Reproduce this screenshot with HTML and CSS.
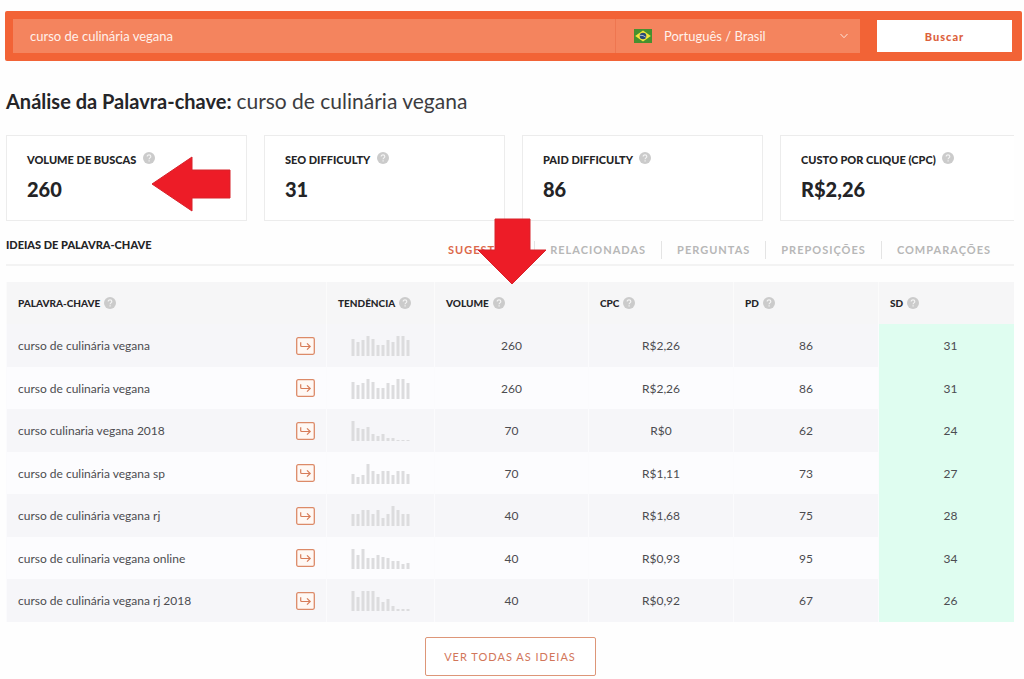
FILE: index.html
```html
<!DOCTYPE html>
<html lang="pt-BR">
<head>
    <meta charset="UTF-8">
    <meta name="viewport" content="width=device-width, initial-scale=1.0">
    <title>Análise da Palavra-chave</title>
    <link rel="stylesheet" href="styles.css">
</head>
<body>
    <!-- Shared icons -->
    <svg class="sprite" width="0" height="0" aria-hidden="true">
        <symbol id="help" viewBox="0 0 12 12">
            <circle cx="6" cy="6" r="6" fill="#cbcbcb"/>
            <path d="M4.2 4.6c0-2.4 3.6-2.3 3.6-.1 0 1.300-1.700 1.400-1.700 2.700M6.100 8.300v1.200" fill="none" stroke="#f3f3f3" stroke-width="1.200"/>
        </symbol>
        <symbol id="go" viewBox="0 0 19 18">
            <rect x="0.700" y="0.700" width="17.600" height="16.600" rx="1.500" fill="#fff8f4" stroke="#dc8a68" stroke-width="1.300"/>
            <path d="M4.700 5.200v3.300q0 1 1 1h8M11 6.300l3.200 3.200-3.200 3.200" fill="none" stroke="#d77c58" stroke-width="1.200"/>
        </symbol>
    </svg>

    <form class="search">
        <input class="search-input" type="text" aria-label="Palavra-chave" value="curso de culinária vegana">
        <div class="search-lang">
            <svg class="flag" width="18" height="14" viewBox="0 0 18 14" aria-hidden="true">
                <rect width="18" height="14" fill="#46902f"/>
                <path d="M9 1.500L16.800 7 9 12.500 1.200 7z" fill="#f3e63a"/>
                <circle cx="9" cy="7" r="3.300" fill="#294a78"/>
                <path d="M5.900 6.300q3.300-.5 5.900 1.900" fill="none" stroke="#c9d8dc" stroke-width="0.800"/>
            </svg>
            <select class="lang-select" aria-label="Idioma / País">
                <option>Português / Brasil</option>
            </select>
            <svg width="8" height="6" viewBox="0 0 8 6" aria-hidden="true">
                <path d="M0.500 1L4 4.700 7.500 1" fill="none" stroke="#fde3d8"/>
            </svg>
        </div>
        <button class="search-btn" type="button">Buscar</button>
    </form>

    <main class="content">
        <h1>Análise da Palavra-chave: <span>curso de culinária vegana</span></h1>

        <div class="cards">
            <div class="card">
                <h2>VOLUME DE BUSCAS <svg class="help"><use href="#help"/></svg></h2>
                <strong>260</strong>
                <svg class="arrow-left" width="80" height="56" viewBox="0 0 80 56" aria-hidden="true">
                    <path d="M1 28L41 1V14H79V42H41V55z"/>
                </svg>
            </div>
            <div class="card">
                <h2>SEO DIFFICULTY <svg class="help"><use href="#help"/></svg></h2>
                <strong>31</strong>
            </div>
            <div class="card">
                <h2>PAID DIFFICULTY <svg class="help"><use href="#help"/></svg></h2>
                <strong>86</strong>
            </div>
            <div class="card">
                <h2>CUSTO POR CLIQUE (CPC) <svg class="help"><use href="#help"/></svg></h2>
                <strong>R$2,26</strong>
            </div>
        </div>

        <div class="ideas">
            <h2>IDEIAS DE PALAVRA-CHAVE</h2>
            <nav class="tabs">
                <a class="active" href="#">SUGESTÕES</a>
                <a href="#">RELACIONADAS</a>
                <a href="#">PERGUNTAS</a>
                <a href="#">PREPOSIÇÕES</a>
                <a href="#">COMPARAÇÕES</a>
            </nav>
            <svg class="arrow-down" width="70" height="67" viewBox="0 0 70 67" aria-hidden="true">
                <path d="M18 1H53V32H69L35 66 1 32H18z"/>
            </svg>
        </div>

        <table class="keywords">
            <colgroup>
                <col class="col-keyword">
                <col class="col-trend">
                <col class="col-volume">
                <col class="col-num">
                <col class="col-num">
                <col class="col-sd">
            </colgroup>
            <thead>
                <tr>
                    <th>PALAVRA-CHAVE<svg class="help"><use href="#help"/></svg></th>
                    <th>TENDÊNCIA<svg class="help"><use href="#help"/></svg></th>
                    <th>VOLUME<svg class="help"><use href="#help"/></svg></th>
                    <th>CPC<svg class="help"><use href="#help"/></svg></th>
                    <th>PD<svg class="help"><use href="#help"/></svg></th>
                    <th>SD<svg class="help"><use href="#help"/></svg></th>
                </tr>
            </thead>
            <tbody>
                <tr>
                    <td><div class="keyword">curso de culinária vegana <a href="#" aria-label="Analisar"><svg width="19" height="18"><use href="#go"/></svg></a></div></td>
                    <td><svg class="trend" width="57" height="21"><path d="M1 21v-17M6 21v-14M11 21v-16M16 21v-20M21 21v-17M26 21v-11M31 21v-11M36 21v-16M41 21v-14M46 21v-20M51 21v-20M56 21v-16"/></svg></td>
                    <td>260</td><td>R$2,26</td><td>86</td><td>31</td>
                </tr>
                <tr>
                    <td><div class="keyword">curso de culinaria vegana <a href="#" aria-label="Analisar"><svg width="19" height="18"><use href="#go"/></svg></a></div></td>
                    <td><svg class="trend" width="57" height="21"><path d="M1 21v-17M6 21v-14M11 21v-16M16 21v-20M21 21v-17M26 21v-11M31 21v-11M36 21v-16M41 21v-14M46 21v-20M51 21v-20M56 21v-16"/></svg></td>
                    <td>260</td><td>R$2,26</td><td>86</td><td>31</td>
                </tr>
                <tr>
                    <td><div class="keyword">curso culinaria vegana 2018 <a href="#" aria-label="Analisar"><svg width="19" height="18"><use href="#go"/></svg></a></div></td>
                    <td><svg class="trend" width="57" height="21"><path d="M1 21v-20M6 21v-13M11 21v-12M16 21v-14M21 21v-7M26 21v-5M31 21v-7M36 21v-3M41 21v-3M46 21v-1M51 21v-1M56 21v-1"/></svg></td>
                    <td>70</td><td>R$0</td><td>62</td><td>24</td>
                </tr>
                <tr>
                    <td><div class="keyword">curso de culinária vegana sp <a href="#" aria-label="Analisar"><svg width="19" height="18"><use href="#go"/></svg></a></div></td>
                    <td><svg class="trend" width="57" height="21"><path d="M1 21v-10M6 21v-7M11 21v-9M16 21v-20M21 21v-13M26 21v-10M31 21v-13M36 21v-13M41 21v-9M46 21v-13M51 21v-13M56 21v-10"/></svg></td>
                    <td>70</td><td>R$1,11</td><td>73</td><td>27</td>
                </tr>
                <tr>
                    <td><div class="keyword">curso de culinária vegana rj <a href="#" aria-label="Analisar"><svg width="19" height="18"><use href="#go"/></svg></a></div></td>
                    <td><svg class="trend" width="57" height="21"><path d="M1 21v-12M6 21v-12M11 21v-16M16 21v-16M21 21v-12M26 21v-16M31 21v-8M36 21v-12M41 21v-20M46 21v-16M51 21v-12M56 21v-12"/></svg></td>
                    <td>40</td><td>R$1,68</td><td>75</td><td>28</td>
                </tr>
                <tr>
                    <td><div class="keyword">curso de culinaria vegana online <a href="#" aria-label="Analisar"><svg width="19" height="18"><use href="#go"/></svg></a></div></td>
                    <td><svg class="trend" width="57" height="21"><path d="M1 21v-20M6 21v-14M11 21v-20M16 21v-11M21 21v-11M26 21v-14M31 21v-12M36 21v-11M41 21v-8M46 21v-8M51 21v-5M56 21v-6"/></svg></td>
                    <td>40</td><td>R$0,93</td><td>95</td><td>34</td>
                </tr>
                <tr>
                    <td><div class="keyword">curso de culinária vegana rj 2018 <a href="#" aria-label="Analisar"><svg width="19" height="18"><use href="#go"/></svg></a></div></td>
                    <td><svg class="trend" width="57" height="21"><path d="M1 21v-20M6 21v-14M11 21v-20M16 21v-20M21 21v-20M26 21v-14M31 21v-9M36 21v-12M41 21v-5M46 21v-2M51 21v-2M56 21v-2"/></svg></td>
                    <td>40</td><td>R$0,92</td><td>67</td><td>26</td>
                </tr>
            </tbody>
        </table>

        <button class="see-all" type="button">VER TODAS AS IDEIAS</button>
    </main>
</body>
</html>
```
FILE: styles.css
```css
* {
    box-sizing: border-box;
}
body {
    margin: 0;
    padding: 11px 2px 0 5px;
    font-family: Lato, "Open Sans", sans-serif;
    font-size: 12px;
    color: #4c4c50;
    background: #fefefe;
}
h1, h2 {
    margin: 0;
}
.sprite {
    position: absolute;
}
.help {
    width: 12px;
    height: 12px;
}

/* Search bar */
.search {
    display: flex;
    align-items: center;
    padding: 8px 10px 8px 8px;
    background: #f26336;
    border-radius: 2px;
}
.search-input,
.search-lang {
    height: 34px;
    background: #f4845e;
    color: #fff1eb;
}
.search-input {
    flex: 1;
    min-width: 0;
    padding: 0 17px;
    border: 0;
    border-right: 1px solid #ee7650;
    font: 13px Lato, sans-serif;
}
.search-lang {
    display: flex;
    align-items: center;
    width: 244px;
    padding: 0 12px 0 18px;
}
.lang-select {
    flex: 1;
    margin-left: 12px;
    padding: 0;
    border: 0;
    appearance: none;
    background: transparent;
    color: inherit;
    font: 13px Lato, sans-serif;
}
.search-btn {
    width: 135px;
    height: 32px;
    margin-left: 17px;
    border: 0;
    background: #fff;
    color: #dc603c;
    font: 900 11px Lato, sans-serif;
    letter-spacing: 1px;
}

.content {
    padding: 0 8px 0 1px;
}
h1 {
    margin: 26px 0 20px;
    font-size: 20px;
    line-height: 28px;
    color: #252528;
}
h1 span {
    font-size: 21px;
    font-weight: normal;
    color: #3c3c40;
}

/* Metric cards */
.cards {
    display: grid;
    grid-template-columns: 241fr 241fr 241fr 234fr;
    gap: 17px;
}
.card {
    position: relative;
    height: 86px;
    padding: 16px 20px;
    border: 1px solid #ececec;
    background: #fff;
    color: #242426;
}
.card:last-child {
    border-right: 0;
}
.card h2 {
    font-size: 11px;
    font-weight: 900;
    line-height: 16px;
    white-space: nowrap;
}
.card .help {
    margin-left: 4px;
}
.card strong {
    display: block;
    margin-top: 8px;
    font-size: 20px;
    font-weight: 900;
    line-height: 26px;
}
.arrow-left,
.arrow-down {
    position: absolute;
    fill: #ed1c27;
    stroke: #d8222b;
}
.arrow-left {
    top: 20px;
    right: 15px;
}

/* Keyword ideas */
.ideas {
    position: relative;
    display: flex;
    justify-content: space-between;
    height: 45px;
    margin-bottom: 16px;
    border-bottom: 2px solid #f3f3f3;
}
.ideas h2 {
    padding-top: 16px;
    font-size: 11px;
    font-weight: 900;
    line-height: 16px;
    color: #242426;
}
.tabs {
    display: flex;
    align-items: center;
    padding: 14px 8px 0 0;
}
.tabs a {
    padding: 0 15px;
    border-left: 1px solid #e4e4e4;
    font-size: 11px;
    font-weight: bold;
    line-height: 18px;
    letter-spacing: 1px;
    color: #b7b7b7;
    text-decoration: none;
}
.tabs .active {
    border-left: 0;
    color: #dc684a;
}
.arrow-down {
    top: -3px;
    left: 471px;
    z-index: 1;
}

.keywords {
    width: 100%;
    table-layout: fixed;
    border-collapse: collapse;
}
.col-keyword { width: 320px; }
.col-trend { width: 108px; }
.col-volume { width: 154px; }
.col-num { width: 145px; }
.keywords th {
    height: 42px;
    padding: 0 0 0 11px;
    border-left: 1px solid #fbfbfb;
    background: #f6f6f7;
    font-size: 10px;
    font-weight: 900;
    text-align: left;
    color: #252528;
}
.keywords th .help {
    margin-left: 4px;
    vertical-align: -2px;
}
.keywords td {
    height: 42px;
    padding: 0;
    border-left: 1px solid #fbfbfd;
    background: #fcfcfe;
    text-align: center;
}
.keywords tr:nth-child(odd) td {
    height: 43px;
    background: #f6f6f9;
}
.keywords tbody tr td:last-child {
    padding-left: 8px;
    background: #dffdf0;
}
.keyword {
    display: flex;
    align-items: center;
    justify-content: space-between;
    padding: 0 11px;
}
.keyword svg,
.trend {
    display: block;
}
.trend {
    margin: 0 auto;
    overflow: visible;
    stroke: #dcdcde;
    stroke-width: 3px;
}

.see-all {
    display: block;
    width: 171px;
    height: 39px;
    margin: 15px auto 0;
    border: 1px solid #dd9678;
    border-radius: 2px;
    background: #fff;
    color: #d2765a;
    font: 11px Lato, sans-serif;
    letter-spacing: 1px;
}
```
